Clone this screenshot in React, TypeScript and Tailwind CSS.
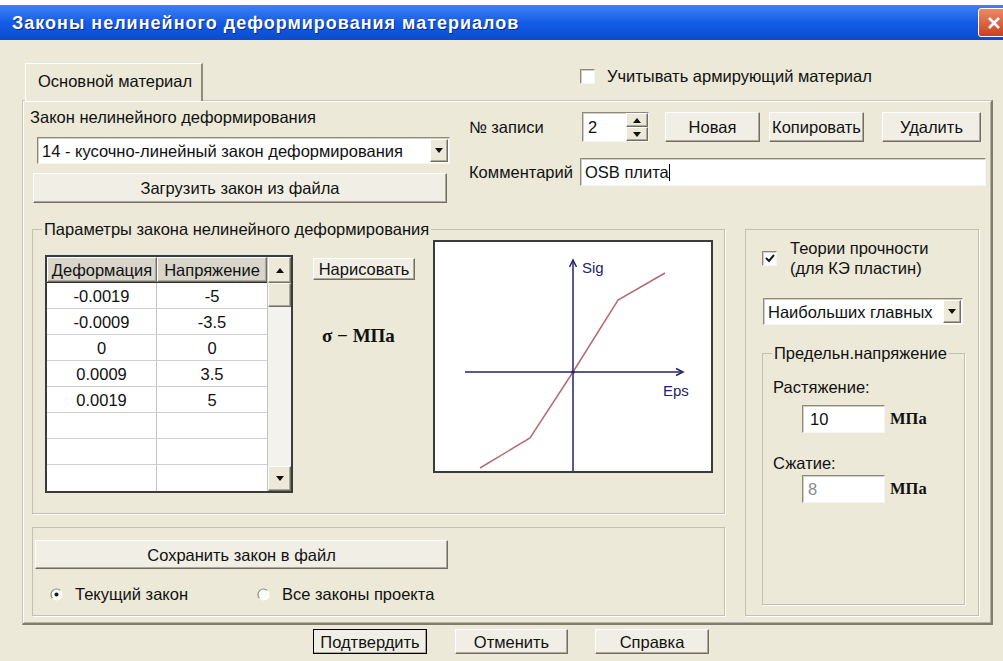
import React from 'react';

type BoxProps = { children?: React.ReactNode; className?: string };

// classic 3D edges used by buttons and fields
const raised =
  'border border-t-white border-l-white border-r-[#716f64] border-b-[#716f64] shadow-[inset_-1px_-1px_0_#aca899]';
const sunken =
  'border border-t-[#8d8a7c] border-l-[#8d8a7c] border-r-[#f6f5f0] border-b-[#f6f5f0] shadow-[inset_1px_1px_0_#d2cfc1]';
const etched = 'border border-[#c3c0b0] shadow-[1px_1px_0_#ffffff]';

const rows: [string, string][] = [
    ['-0.0019', '-5'],
    ['-0.0009', '-3.5'],
    ['0', '0'],
    ['0.0009', '3.5'],
    ['0.0019', '5'],
    ['', ''],
    ['', ''],
    ['', ''],
];

function Tri({ up = false }: { up?: boolean }) {
    return (
        <svg width="8" height="5" viewBox="0 0 8 5">
            <path d={up ? 'M0 5h8L4 0z' : 'M0 0h8L4 5z'} fill="#111" />
        </svg>
    );
}

function Btn({ children, className = '' }: BoxProps) {
    return (
        <button type="button" className={`flex items-center justify-center bg-[#f1efe5] ${raised} ${className}`}>
            {children}
        </button>
    );
}

function Combo({ text, className = '' }: { text: string; className?: string }) {
    return (
        <div className={`flex bg-white ${sunken} ${className}`}>
            <span className="flex-1 flex items-center pl-[4px] whitespace-nowrap overflow-hidden">{text}</span>
            <span className={`w-[18px] my-[1px] mr-[1px] flex items-center justify-center bg-[#ece9d8] ${raised}`}>
                <Tri />
            </span>
        </div>
    );
}

function CheckBox({ checked = false, className = '' }: { checked?: boolean; className?: string }) {
    return (
        <span className={`shrink-0 w-[15px] h-[15px] flex items-center justify-center bg-white ${sunken} ${className}`}>
            {checked && (
                <svg width="10" height="9" viewBox="0 0 10 9">
                    <path d="M1 4l3 3 5-6" stroke="#1a1a1a" strokeWidth="2" fill="none" />
                </svg>
            )}
        </span>
    );
}

function Radio({ checked = false }: { checked?: boolean }) {
    return (
        <svg width="13" height="13" viewBox="0 0 13 13" className="shrink-0">
            <circle cx="6.5" cy="6.5" r="5.5" fill="#fbfbf8" />
            <path d="M2.6 10.4A5.5 5.5 0 0 1 10.4 2.6" stroke="#8d8a7c" strokeWidth="1.2" fill="none" />
            <path d="M10.4 2.6A5.5 5.5 0 0 1 2.6 10.4" stroke="#ffffff" strokeWidth="1.2" fill="none" />
            {checked && <circle cx="6.5" cy="6.5" r="2" fill="#1a1a1a" />}
        </svg>
    );
}

function LawTable() {
    return (
        <div className="mt-[17px] ml-[12px] flex w-[248px] h-[238px] bg-white border-2 border-[#3b3b3b]">
            <div className="flex-1 flex flex-col">
                <div className="flex h-[26px] border-b border-[#2e2e2e]">
                    <div className={`w-[110px] flex items-center justify-center bg-[#d8d5ca] ${raised}`}>Деформация</div>
                    <div className={`flex-1 flex items-center justify-center bg-[#d8d5ca] ${raised}`}>Напряжение</div>
                </div>
                {rows.map(([eps, sig], i) => (
                    <div key={i} className="flex h-[26px] border-b border-[#d0d0d0] last:border-b-0">
                        <div className="w-[110px] flex items-center justify-center border-r border-[#c4c4c4]">{eps}</div>
                        <div className="flex-1 flex items-center justify-center">{sig}</div>
                    </div>
                ))}
            </div>
            {/* vertical scroll bar */}
            <div className="w-[24px] flex flex-col bg-[#f3f2ec] border-l border-[#c4c4c4]">
                <span className={`h-[26px] flex items-center justify-center bg-[#ece9d8] ${raised}`}>
                    <Tri up />
                </span>
                <span className={`h-[24px] bg-[#ece9d8] ${raised}`} />
                <span className="flex-1" />
                <span className={`h-[25px] flex items-center justify-center bg-[#ece9d8] ${raised}`}>
                    <Tri />
                </span>
            </div>
        </div>
    );
}

function Chart() {
    return (
        <div className="mt-[2px] ml-[18px] w-[280px] h-[233px] bg-white border-2 border-[#3b3b3b]">
            <svg width="276" height="229" viewBox="0 0 276 229">
                <g stroke="#23236e" strokeWidth="1.5" fill="none">
                    <path d="M138 229V18" />
                    <path d="M134.5 25l3.5-7 3.5 7" />
                    <path d="M30 130H248" />
                    <path d="M241 126.5l7 3.5-7 3.5" />
                </g>
                <polyline
                    points="45,226 95,196 138,130 183,58 230,31"
                    fill="none"
                    stroke="#b56a72"
                    strokeWidth="1.5"
                />
                <circle cx="138" cy="130" r="1.8" fill="#23236e" />
                <g fill="#23236e" fontSize="15" fontFamily="Liberation Sans, Arial, sans-serif">
                    <text x="147" y="31">Sig</text>
                    <text x="228" y="154">Eps</text>
                </g>
            </svg>
        </div>
    );
}

export default function App() {
    return (
        <div className="w-[1003px] h-[661px] overflow-hidden bg-[#ece9d8] font-['Liberation_Sans',Arial,sans-serif] text-[16.5px] leading-[18px] text-[#111]">
            <div className="h-[5px] bg-white" />

            {/* window caption */}
            <div className="h-[35px] flex items-center pl-[12px] bg-linear-to-b from-[#3d82f4] via-[#145ce6] to-[#0a4ccc]">
                <span className="text-white font-bold text-[18px] tracking-[1px] [text-shadow:1px_1px_0_#0a2a80]">
                    Законы нелинейного деформирования материалов
                </span>
                <button
                    type="button"
                    className="ml-auto mr-[-6px] w-[31px] h-[29px] rounded-[3px] border border-white bg-linear-to-b from-[#ea8a66] to-[#c8401b] flex items-center justify-center"
                >
                    <svg width="14" height="14" viewBox="0 0 14 14">
                        <path d="M2 2L12 12M12 2L2 12" stroke="#fff" strokeWidth="2.5" />
                    </svg>
                </button>
            </div>

            {/* tab strip */}
            <div className="h-[60px] flex items-end pl-[25px]">
                <div className="relative z-10 mb-[-1px] h-[38px] w-[178px] flex items-center pl-[12px] pb-[3px] bg-[#ece9d8] border-t border-l border-t-white border-l-white border-r-2 border-r-[#8f8c7d]">
                    Основной материал
                </div>
                <label className="self-start mt-[27px] ml-[377px] flex items-center gap-[12px]">
                    <CheckBox />
                    Учитывать армирующий материал
                </label>
            </div>

            {/* tab page */}
            <div className="ml-[22px] mr-[10px] h-[525px] border-t border-l border-t-[#c9c6b6] border-l-[#c9c6b6] border-r-2 border-b-2 border-r-[#7f7c70] border-b-[#7f7c70] shadow-[inset_1px_1px_0_#fff,inset_-1px_-1px_0_#b5b2a3]">
                <div className="flex">
                    <div className="w-[432px] pl-[7px] flex flex-col">
                        <div className="mt-[7px] h-[18px]">Закон нелинейного деформирования</div>
                        <Combo className="mt-[11px] ml-[7px] w-[413px] h-[27px]" text="14 - кусочно-линейный закон деформирования" />
                        <Btn className="mt-[9px] ml-[3px] w-[414px] h-[30px]">Загрузить закон из файла</Btn>
                    </div>

                    <div className="ml-[14px] flex flex-col">
                        <div className="mt-[11px] h-[30px] flex items-center">
                            <span className="w-[113px]">№ записи</span>
                            <div className={`flex w-[67px] h-[30px] bg-white ${sunken}`}>
                                <span className="flex-1 flex items-center pl-[5px]">2</span>
                                <div className="w-[22px] flex flex-col bg-[#ece9d8]">
                                    <span className={`flex-1 flex items-center justify-center ${raised}`}>
                                        <Tri up />
                                    </span>
                                    <span className={`flex-1 flex items-center justify-center ${raised}`}>
                                        <Tri />
                                    </span>
                                </div>
                            </div>
                            <Btn className="ml-[16px] w-[95px] h-[30px]">Новая</Btn>
                            <Btn className="ml-[9px] w-[95px] h-[30px]">Копировать</Btn>
                            <Btn className="ml-[18px] w-[99px] h-[30px]">Удалить</Btn>
                        </div>
                        <div className="mt-[16px] h-[28px] flex items-center">
                            <span className="w-[111px]">Комментарий</span>
                            <div className={`w-[406px] h-[28px] flex items-center pl-[4px] bg-white ${sunken}`}>
                                OSB плита
                                <span className="w-px h-[17px] bg-black" />
                            </div>
                        </div>
                    </div>
                </div>

                <div className="mt-[17px] pl-[9px] flex gap-[20px]">
                    <div className="w-[693px] flex flex-col">
                        <fieldset className={`h-[294px] ${etched}`}>
                            <legend className="ml-[9px] px-[2px] leading-[18px]">
                                Параметры закона нелинейного деформирования
                            </legend>
                            <div className="flex items-start">
                                <LawTable />
                                <div className="ml-[20px] mt-[20px] w-[102px] flex flex-col">
                                    <Btn className="w-[102px] h-[22px]">Нарисовать</Btn>
                                    <div className="mt-[45px] pl-[9px] leading-[22px] font-['Liberation_Serif',serif] font-bold text-[19px]">
                                        σ − МПа
                                    </div>
                                </div>
                                <Chart />
                            </div>
                        </fieldset>

                        <div className={`mt-[13px] h-[89px] ${etched}`}>
                            <Btn className="mt-[12px] ml-[2px] w-[413px] h-[29px]">Сохранить закон в файл</Btn>
                            <div className="mt-[15px] h-[20px] flex items-center pl-[17px]">
                                <label className="w-[207px] flex items-center gap-[12px]">
                                    <Radio checked />
                                    Текущий закон
                                </label>
                                <label className="flex items-center gap-[12px]">
                                    <Radio />
                                    Все законы проекта
                                </label>
                            </div>
                        </div>
                    </div>

                    {/* strength theory panel */}
                    <div className={`mt-[9px] w-[234px] h-[387px] flex flex-col ${etched}`}>
                        <div className="mt-[8px] ml-[16px] flex items-start">
                            <CheckBox checked className="mt-[13px]" />
                            <div className="ml-[13px] leading-[20px]">
                                Теории прочности
                                <br />
                                (для КЭ пластин)
                            </div>
                        </div>
                        <Combo className="mt-[20px] ml-[17px] w-[200px] h-[27px]" text="Наибольших главных" />
                        <fieldset className={`mt-[19px] ml-[16px] w-[203px] h-[261px] ${etched}`}>
                            <legend className="ml-[9px] px-[2px] leading-[18px]">Предельн.напряжение</legend>
                            <div className="mt-[16px] ml-[10px] h-[18px]">Растяжение:</div>
                            <div className="mt-[9px] ml-[39px] h-[28px] flex items-center">
                                <div className={`w-[83px] h-[28px] flex items-center pl-[7px] bg-white ${sunken}`}>10</div>
                                <span className="ml-[5px] font-['Liberation_Serif',serif] font-bold">МПа</span>
                            </div>
                            <div className="mt-[21px] ml-[10px] h-[18px]">Сжатие:</div>
                            <div className="mt-[3px] ml-[39px] h-[28px] flex items-center">
                                <div className={`w-[83px] h-[28px] flex items-center pl-[5px] bg-white text-[#8a8a8a] ${sunken}`}>8</div>
                                <span className="ml-[5px] font-['Liberation_Serif',serif] font-bold">МПа</span>
                            </div>
                        </fieldset>
                    </div>
                </div>
            </div>

            {/* dialog buttons */}
            <div className="mt-[4px] pl-[313px] flex">
                <Btn className="w-[114px] h-[25px] outline outline-1 outline-black -outline-offset-1">Подтвердить</Btn>
                <Btn className="ml-[28px] w-[113px] h-[25px]">Отменить</Btn>
                <Btn className="ml-[27px] w-[114px] h-[25px]">Справка</Btn>
            </div>
        </div>
    );
}
